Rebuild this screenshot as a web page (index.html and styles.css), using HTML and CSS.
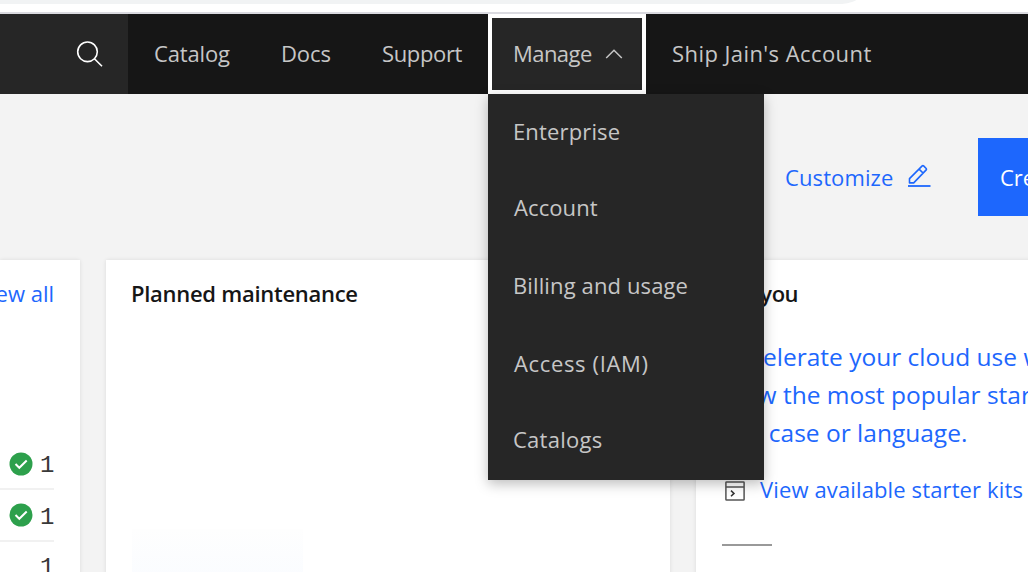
FILE: index.html
```html
<!DOCTYPE html>
<html lang="en">
<head>
<meta charset="utf-8">
<title>Dashboard</title>
<link rel="stylesheet" href="styles.css">
</head>
<body>
<div class="page">
  <div class="browser-edge"><div class="address-bar"></div></div>
  <header class="header">
    <div class="search">
      <svg class="search-icon" width="28" height="28" viewBox="0 0 28 28" fill="none" stroke="#fff" stroke-width="1.6"><circle cx="11.5" cy="11.8" r="9.8"/><path d="M18.4 18.7 26 26.3"/></svg>
    </div>
    <nav class="nav">
      <a class="nav-item catalog">Catalog</a>
      <a class="nav-item docs">Docs</a>
      <a class="nav-item support">Support</a>
      <div class="manage-wrap">
        <a class="nav-item manage"><span>Manage</span>
          <svg class="chevron" width="18" height="12" viewBox="0 0 18 12" fill="none" stroke="#c6c6c6" stroke-width="1.5"><path d="M1.2 10 9 2.2 16.8 10"/></svg>
        </a>
        <div class="menu">
          <a class="menu-item enterprise">Enterprise</a>
          <a class="menu-item account-link">Account</a>
          <a class="menu-item billing">Billing and usage</a>
          <a class="menu-item access">Access (IAM)</a>
          <a class="menu-item catalogs">Catalogs</a>
        </div>
      </div>
      <a class="nav-item account">Ship Jain's Account</a>
    </nav>
  </header>
  <div class="toolbar">
    <a class="customize"><span>Customize</span>
      <svg width="24" height="24" viewBox="0 0 24 24" fill="none" stroke="#1d67fd" stroke-width="1.6" stroke-linejoin="round"><path d="M2.5 18.9V14.6L15.2 1.9Q15.9 1.3 16.6 1.9L19.2 4.5Q19.8 5.2 19.2 5.9L6.7 18.9ZM12.1 5.1 16 9"/><path d="M1 22H23.5" stroke-width="1.8"/></svg>
    </a>
    <button class="create">Create</button>
  </div>
  <main class="cards">
    <section class="card status-card">
      <a class="view-all">View all</a>
      <div class="status-row">
        <svg width="24" height="24" viewBox="0 0 24 24"><circle cx="12" cy="12" r="11.5" fill="#2da04c"/><path d="m6.5 12 3.8 3.8 7.4-7.3" fill="none" stroke="#fff" stroke-width="2"/></svg><span class="count">1</span>
      </div>
      <div class="status-row second">
        <svg width="24" height="24" viewBox="0 0 24 24"><circle cx="12" cy="12" r="11.5" fill="#2da04c"/><path d="m6.5 12 3.8 3.8 7.4-7.3" fill="none" stroke="#fff" stroke-width="2"/></svg><span class="count">1</span>
      </div>
      <div class="status-row third"><span class="count">1</span></div>
    </section>
    <section class="card maintenance-card">
      <h2 class="title">Planned maintenance</h2>
      <div class="illustration"></div>
    </section>
    <section class="card foryou-card">
      <h2 class="title foryou">For you</h2>
      <a class="promo">
        <span class="line one">Accelerate your cloud use with</span>
        <span class="line two">View the most popular starter kits</span>
        <span class="line three">use case or language.</span>
      </a>
      <a class="kits">
        <svg width="20" height="20" viewBox="0 0 20 20" fill="none" stroke="#555" stroke-width="1.5"><rect x=".9" y=".9" width="18.2" height="18.2" rx=".7"/><path d="M1 6H19"/><path d="m6 9.6 3 2.8-3 2.8" stroke="#333"/></svg>
        <span>View available starter kits</span>
      </a>
      <div class="rule"></div>
    </section>
  </main>
</div>
</body>
</html>
```
FILE: styles.css
```css
* { box-sizing: border-box; }
body { margin: 0; font-family: "Open Sans", "Noto Sans", sans-serif; font-size: 22px; line-height: 30px; }
.page { width: 1028px; height: 572px; overflow: hidden; background: #f3f3f3; display: flex; flex-direction: column; white-space: nowrap; }
.browser-edge { height: 14px; flex: none; background: #fff; border-bottom: 2px solid #dadae0; overflow: hidden; display: flex; align-items: flex-start; }
.address-bar { width: 870px; height: 30px; margin-top: -26px; background: #f1f3f4; border-radius: 0 0 28px 0; }

.header { height: 80px; flex: none; display: flex; background: #161616; color: #c6c6c6; }
.search { width: 128px; background: #262626; padding: 26px 0 0 76px; }
.search-icon { display: block; }
.nav { display: flex; }
.nav-item { height: 80px; padding: 24px 0 0 26px; flex: none; }
.catalog { width: 127px; letter-spacing: -.15px; }
.docs { width: 102px; letter-spacing: -.1px; }
.support { width: 131px; padding-left: 25px; letter-spacing: -.35px; }
.manage-wrap { position: relative; width: 158px; height: 80px; }
.manage { display: flex; background: #262626; border: 4px solid #fff; padding: 20px 0 0 21px; letter-spacing: -.55px; }
.manage span { width: 92px; }
.chevron { margin-top: 10px; }
.account { letter-spacing: .43px; }
.menu { position: absolute; z-index: 2; left: 0; top: 80px; width: 276px; height: 386px; background: #262626; display: grid; grid-template-rows: 74px 78px 78px 78px 74px; align-items: center; padding-left: 25px; box-shadow: 0 4px 12px rgba(0, 0, 0, .26); }
.menu-item { height: 30px; }
.enterprise { letter-spacing: .15px; }
.account-link { padding-left: 1px; letter-spacing: .1px; }
.billing { letter-spacing: .12px; }
.access { padding-left: 1px; letter-spacing: .65px; }
.catalogs { letter-spacing: .25px; }

.toolbar { height: 166px; flex: none; display: flex; padding: 44px 0 0 785px; }
.customize { display: flex; flex: none; width: 193px; padding-top: 24px; color: #1d67fd; letter-spacing: .1px; }
.customize span { width: 122px; }
.customize svg { margin-top: 2px; }
.create { width: 160px; height: 78px; flex: none; padding: 0 0 1px 22px; border: 0; background: #1d67fd; color: #fff; font: inherit; text-align: left; }

.cards { display: grid; grid-template-columns: 80px 564px 560px; gap: 26px; height: 312px; flex: none; }
.card { background: #fff; box-shadow: 0 0 4px rgba(0, 0, 0, .1); overflow: hidden; height: 330px; }
.status-card { display: flex; flex-direction: column; align-items: flex-end; padding: 18px 26px 0 0; color: #1d67fd; }
.view-all { height: 156px; flex: none; }
.status-row { width: 54px; height: 56px; flex: none; display: flex; align-items: flex-start; justify-content: flex-end; gap: 7px; padding-top: 18px; border-bottom: 2px solid #f1f1f1; }
.second { height: 52px; padding-top: 13px; }
.second .count { padding-top: 3px; }
.third { border: 0; padding-top: 12px; }
.count { width: 14px; padding-top: 2px; color: #393939; font: 24px/24px "Liberation Mono", monospace; text-align: center; }
.title { margin: 0; font-size: 22px; line-height: 30px; font-weight: 600; color: #161616; letter-spacing: -.28px; }
.foryou { letter-spacing: -.5px; }
.maintenance-card { padding: 18px 26px 0 25px; }
.illustration { width: 171px; height: 50px; margin: 221px 0 0 1px; background: linear-gradient(#fefefe, #fafcff); }
.foryou-card { padding: 18px 0 0 26px; color: #1d67fd; }
.promo { display: block; margin-top: 30px; font-size: 24.5px; line-height: 38px; }
.line { display: block; }
.one { padding-left: 2px; }
.two { padding-left: 1px; }
.kits { display: flex; margin-top: 22px; letter-spacing: .13px; }
.kits svg { margin: 0 15px 0 3px; transform: translateY(7px); }
.rule { width: 50px; height: 2px; margin-top: 40px; background: #999; }
```
